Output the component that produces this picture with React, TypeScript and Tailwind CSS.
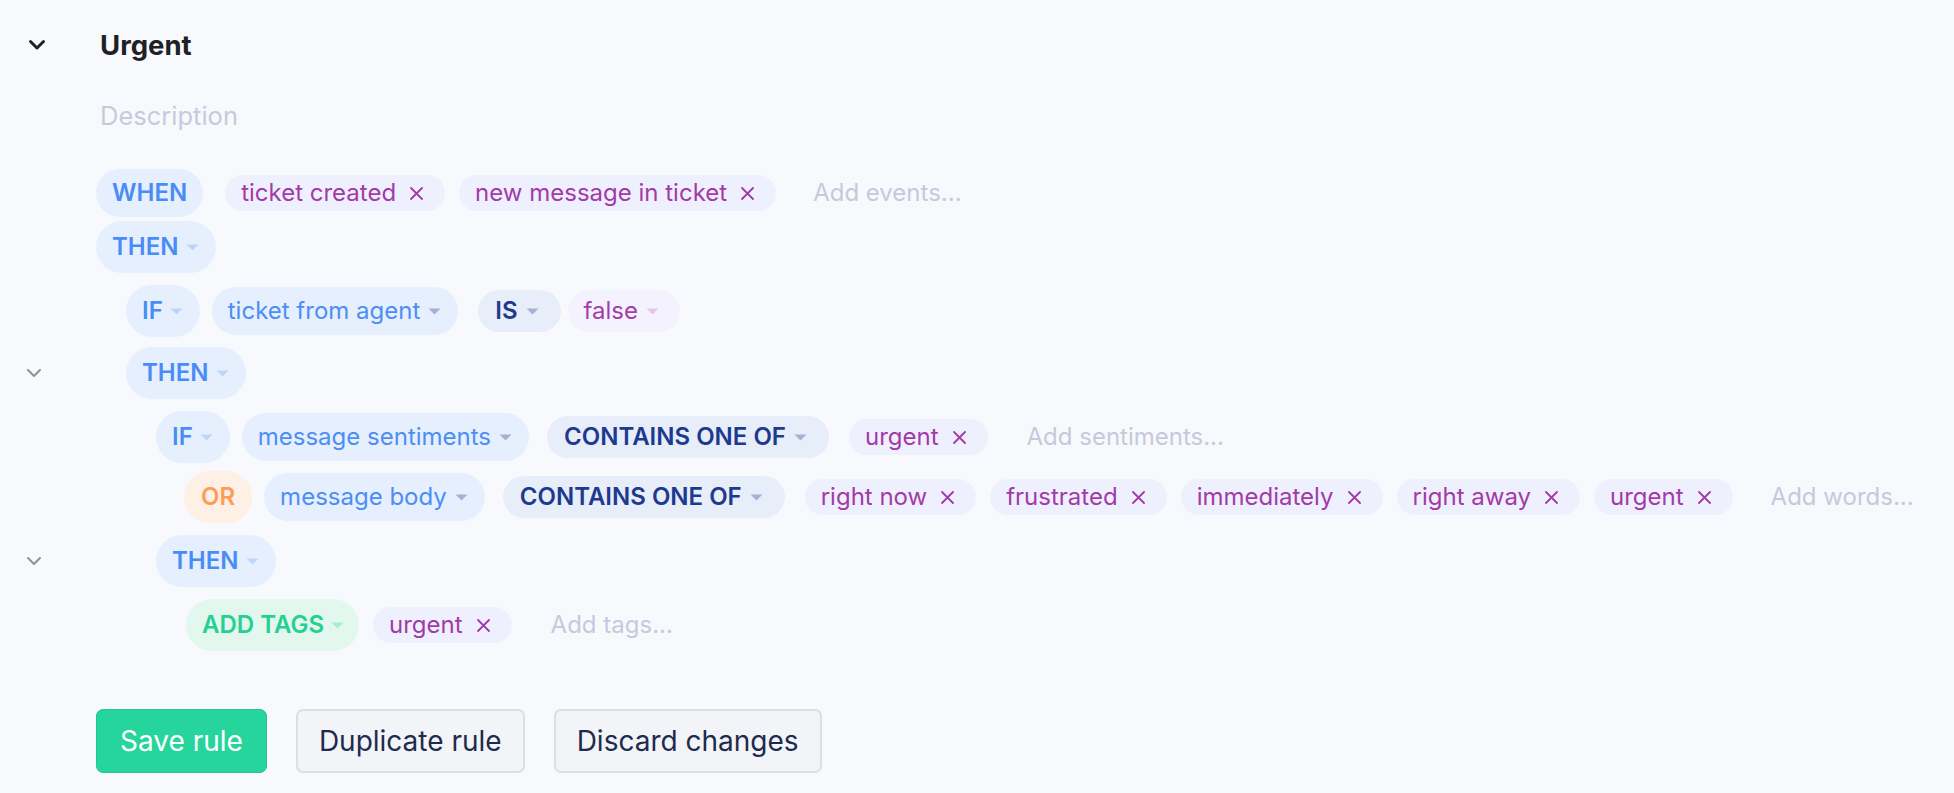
import React from "react";

// little dropdown triangle used inside the pills
const Caret = ({ className }: { className: string }) => (
  <svg width="13" height="7" viewBox="0 0 13 7" className={`shrink-0 ${className}`}>
    <path d="M0.5 0.5h12L6.5 6.5z" fill="currentColor" />
  </svg>
);

const Cross = () => (
  <svg width="13" height="13" viewBox="0 0 13 13" className="shrink-0 text-[#a33aa7]">
    <path d="M1 1l11 11M12 1L1 12" stroke="currentColor" strokeWidth="1.8" strokeLinecap="round" />
  </svg>
);

const SmallChevron = () => (
  <svg width="16" height="10" viewBox="0 0 16 10" className="text-[#8e929b]">
    <path d="M2 2l6 6 6-6" stroke="currentColor" strokeWidth="2" fill="none" strokeLinecap="round" strokeLinejoin="round" />
  </svg>
);

type PillProps = { label: string; className?: string };

const Keyword: React.FC<PillProps & { caret?: boolean; tall?: boolean }> = ({ label, caret = true, tall = true, className = "" }) => (
  <div className={`flex shrink-0 items-center rounded-full bg-[#e5effe] pl-[16px] font-semibold text-[#4a8cf6] ${tall ? "h-[52px]" : "h-[48px]"} ${caret ? "pr-[17px]" : "pr-[16px]"} ${className}`}>
    <span>{label}</span>
    {caret && <Caret className="ml-[7px] text-[#bcd5fb]" />}
  </div>
);

const Field: React.FC<PillProps> = ({ label, className = "" }) => (
  <div className={`flex h-[48px] shrink-0 items-center rounded-full bg-[#e6effd] pl-[16px] pr-[17px] text-[#4d8df6] ${className}`}>
    <span>{label}</span>
    <Caret className="ml-[8px] text-[#a9afd2]" />
  </div>
);

const Operator: React.FC<PillProps> = ({ label, className = "" }) => (
  <div className={`flex h-[42px] shrink-0 items-center rounded-full bg-[#e7edf9] pl-[17px] pr-[22px] font-semibold text-[#1c3a8e] ${className}`}>
    <span>{label}</span>
    <Caret className="ml-[8px] text-[#a7b1d5]" />
  </div>
);

const Value: React.FC<PillProps> = ({ label, className = "" }) => (
  <div className={`flex h-[42px] shrink-0 items-center rounded-full bg-[#f4f2fe] pl-[16px] pr-[21px] text-[#a43da8] ${className}`}>
    <span>{label}</span>
    <Caret className="ml-[8px] text-[#e4c5ee]" />
  </div>
);

const Tag: React.FC<PillProps> = ({ label, className = "" }) => (
  <div className={`flex h-[36px] shrink-0 items-center gap-[14px] rounded-full bg-[#eef0fe] pl-[16px] pr-[22px] text-[#a33aa7] ${className}`}>
    <span>{label}</span>
    <Cross />
  </div>
);

const Placeholder: React.FC<PillProps> = ({ label, className = "" }) => (
  <span className={`shrink-0 text-[#c6c9dc] ${className}`}>{label}</span>
);

const Row: React.FC<{ chevron?: boolean; indent?: string; className?: string; children: React.ReactNode }> = ({
  chevron,
  indent = "",
  className = "",
  children,
}) => (
  <div className={`flex items-center ${className}`}>
    <div className="flex w-[96px] shrink-0 pl-[26px]">{chevron && <SmallChevron />}</div>
    <div className={`flex items-center ${indent}`}>{children}</div>
  </div>
);

const App: React.FC = () => {
  return (
    <div className="min-h-screen whitespace-nowrap bg-[#f8f9fd] font-['Inter',sans-serif] text-[24px] leading-[28px]">
      {/* TITLE */}
      <div className="flex items-center pt-[27px]">
        <div className="flex w-[96px] shrink-0 pl-[28px]">
          <svg width="18" height="12" viewBox="0 0 18 12" className="text-[#1e2126]">
            <path d="M2.5 2.5l6.5 6.5 6.5-6.5" stroke="currentColor" strokeWidth="3" fill="none" strokeLinecap="round" strokeLinejoin="round" />
          </svg>
        </div>
        <div className="pl-[4px] text-[27.5px] font-bold leading-[36px] text-[#1e2126]">Urgent</div>
      </div>
      <div className="mt-[35px] pl-[100px] text-[25.5px] leading-[36px] text-[#c8cadb]">Description</div>

      {/* WHEN */}
      <Row className="mt-[35px] h-[48px]">
        <Keyword label="WHEN" caret={false} tall={false} />
        <Tag label="ticket created" className="ml-[22px]" />
        <Tag label="new message in ticket" className="ml-[14px]" />
        <Placeholder label="Add events..." className="ml-[37px]" />
      </Row>
      <Row className="mt-[4px] h-[52px]">
        <Keyword label="THEN" />
      </Row>

      {/* IF ticket from agent */}
      <Row indent="ml-[30px]" className="mt-[12px] h-[52px]">
        <Keyword label="IF" />
        <Field label="ticket from agent" className="ml-[12px]" />
        <Operator label="IS" className="ml-[20px]" />
        <Value label="false" className="ml-[7px]" />
      </Row>
      <Row chevron indent="ml-[30px]" className="mt-[10px] h-[52px]">
        <Keyword label="THEN" />
      </Row>

      {/* IF sentiments / OR body */}
      <Row indent="ml-[60px]" className="mt-[12px] h-[52px]">
        <Keyword label="IF" />
        <Field label="message sentiments" className="ml-[12px]" />
        <Operator label="CONTAINS ONE OF" className="ml-[18px]" />
        <Tag label="urgent" className="ml-[20px]" />
        <Placeholder label="Add sentiments..." className="ml-[39px]" />
      </Row>
      <Row indent="ml-[88px]" className="mt-[8px] h-[52px]">
        <div className="flex h-[52px] shrink-0 items-center rounded-full bg-[#fff0e5] px-[17px] font-semibold text-[#ff9b57]">OR</div>
        <Field label="message body" className="ml-[12px]" />
        <Operator label="CONTAINS ONE OF" className="ml-[18px]" />
        <Tag label="right now" className="ml-[20px]" />
        <Tag label="frustrated" className="ml-[14px]" />
        <Tag label="immediately" className="ml-[14px]" />
        <Tag label="right away" className="ml-[14px]" />
        <Tag label="urgent" className="ml-[14px]" />
        <Placeholder label="Add words..." className="ml-[38px]" />
      </Row>
      <Row chevron indent="ml-[60px]" className="mt-[12px] h-[52px]">
        <Keyword label="THEN" />
      </Row>

      {/* ADD TAGS */}
      <Row indent="ml-[90px]" className="mt-[12px] h-[52px]">
        <div className="flex h-[52px] shrink-0 items-center rounded-full bg-[#e2f8ef] pl-[16px] pr-[15px] font-semibold text-[#26cf93]">
          <span>ADD TAGS</span>
          <Caret className="ml-[7px] text-[#a8ecd2]" />
        </div>
        <Tag label="urgent" className="ml-[14px]" />
        <Placeholder label="Add tags..." className="ml-[39px]" />
      </Row>

      {/* BUTTONS */}
      <div className="mt-[58px] flex gap-[29px] pl-[96px] text-[28px]">
        <button className="h-[64px] rounded-[7px] border border-[#21c78f] bg-[#25d59b] px-[23px] text-white">Save rule</button>
        <button className="h-[64px] rounded-[7px] border-2 border-[#dcdee4] bg-[#f3f4f7] px-[21px] text-[#1d2b4f]">Duplicate rule</button>
        <button className="h-[64px] rounded-[7px] border-2 border-[#dcdee4] bg-[#f3f4f7] px-[21px] text-[#1d2b4f]">Discard changes</button>
      </div>
    </div>
  );
};

export default App;
